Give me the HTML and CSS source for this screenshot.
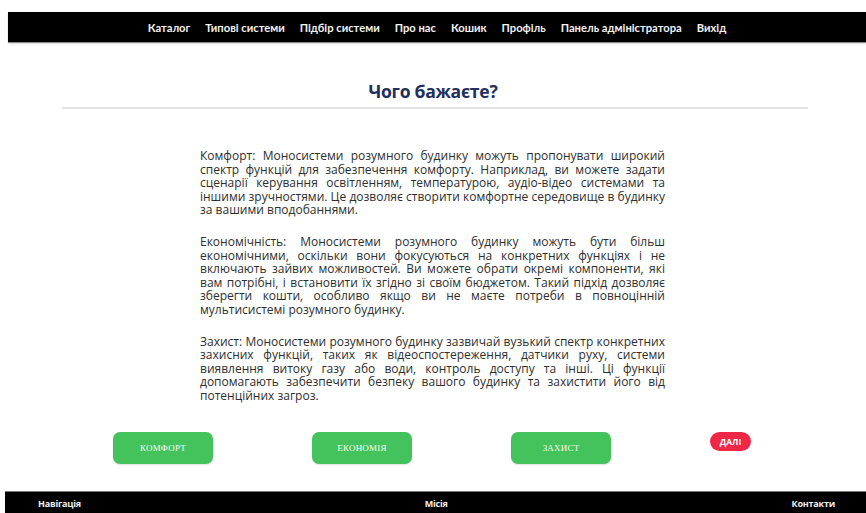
FILE: index.html
```html
<!DOCTYPE html>
<html lang="uk">
<head>
<meta charset="utf-8">
<title>Чого бажаєте?</title>
<link rel="stylesheet" href="styles.css">
</head>
<body>
<header class="topbar">
  <nav class="menu">
    <a href="#">Каталог</a>
    <a href="#">Типові системи</a>
    <a href="#">Підбір системи</a>
    <a href="#">Про нас</a>
    <a href="#">Кошик</a>
    <a href="#">Профіль</a>
    <a href="#">Панель адміністратора</a>
    <a href="#">Вихід</a>
  </nav>
</header>

<main class="content">
  <h1 class="title">Чого бажаєте?</h1>
  <hr class="divider">

  <section class="text">
    <p>Комфорт: Моносистеми розумного будинку можуть пропонувати широкий спектр функцій для забезпечення комфорту. Наприклад, ви можете задати сценарії керування освітленням, температурою, аудіо-відео системами та іншими зручностями. Це дозволяє створити комфортне середовище в будинку за вашими вподобаннями.</p>
    <p>Економічність: Моносистеми розумного будинку можуть бути більш економічними, оскільки вони фокусуються на конкретних функціях і не включають зайвих можливостей. Ви можете обрати окремі компоненти, які вам потрібні, і встановити їх згідно зі своїм бюджетом. Такий підхід дозволяє зберегти кошти, особливо якщо ви не маєте потреби в повноцінній мультисистемі розумного будинку.</p>
    <p>Захист: Моносистеми розумного будинку зазвичай вузький спектр конкретних захисних функцій, таких як відеоспостереження, датчики руху, системи виявлення витоку газу або води, контроль доступу та інші. Ці функції допомагають забезпечити безпеку вашого будинку та захистити його від потенційних загроз.</p>
  </section>

  <div class="choices">
    <button class="choice">КОМФОРТ</button>
    <button class="choice">ЕКОНОМІЯ</button>
    <button class="choice">ЗАХИСТ</button>
    <button class="next">ДАЛІ</button>
  </div>
</main>

<footer class="bottombar">
  <span>Навігація</span>
  <span>Місія</span>
  <span>Контакти</span>
</footer>
</body>
</html>
```

FILE: styles.css
```css
html, body {
  margin: 0;
  padding: 0;
  background: #fff;
  overflow: hidden;
}

/* top navigation bar */
.topbar {
  margin: 12px 0 0 8px;
  height: 30px;
  background: #000;
  border-bottom: 1px solid #8a8a8a;
  box-shadow: 0 1px 2px rgba(0, 0, 0, 0.15);
  display: flex;
  align-items: center;
  justify-content: center;
}

.menu {
  display: flex;
  gap: 15px;
  font-family: "Lato", "DejaVu Sans", sans-serif;
  font-size: 11.2px;
  font-weight: 700;
  letter-spacing: 0;
}

.menu a {
  color: #f2f2f2;
  text-decoration: none;
}

/* main area */
.content {
  display: flex;
  flex-direction: column;
}

.title {
  margin: 37px 0 0;
  text-align: center;
  font-family: "Open Sans", "Noto Sans", sans-serif;
  font-weight: 700;
  font-size: 17.6px;
  line-height: 22px;
  letter-spacing: -0.3px;
  color: #23305e;
}

.divider {
  margin: 5px 58px 0 62px;
  border: 0;
  height: 2px;
  background: #e2e3e6;
}

.text {
  width: 465px;
  margin: 40px 0 0 200px;
  font-family: "Open Sans", "Noto Sans", sans-serif;
  font-size: 12px;
  line-height: 13.6px;
  color: #2e2e2e;
  text-align: justify;
}

.text p {
  margin: 0 0 18px;
}

.text p:last-child {
  margin-bottom: 0;
}

/* choice buttons */
.choices {
  display: flex;
  align-items: flex-start;
  gap: 99px;
  margin: 29px 0 0 113px;
}

.choice {
  width: 100px;
  height: 32px;
  border: 0;
  border-radius: 7px;
  background: #44c25c;
  box-shadow: 0 1px 2px rgba(0, 0, 0, 0.12);
  color: #f4fff6;
  font-family: "Liberation Serif", serif;
  font-size: 9px;
  letter-spacing: 0.2px;
  padding: 0;
}

.next {
  width: 41px;
  height: 19px;
  border: 0;
  border-radius: 10px;
  background: #ee2746;
  color: #fff;
  font-family: "Open Sans", sans-serif;
  font-weight: 700;
  font-size: 8.5px;
  padding: 0;
}

/* footer bar */
.bottombar {
  margin: 27px 0 0 5px;
  height: 26px;
  background: #000;
  border-top: 1px solid #777;
  display: flex;
  justify-content: space-between;
  padding: 5px 31px 0 33px;
  box-sizing: border-box;
  font-family: "Open Sans", "Noto Sans", sans-serif;
  font-weight: 700;
  font-size: 9px;
  letter-spacing: -0.2px;
  color: #f0f0f0;
}
```
